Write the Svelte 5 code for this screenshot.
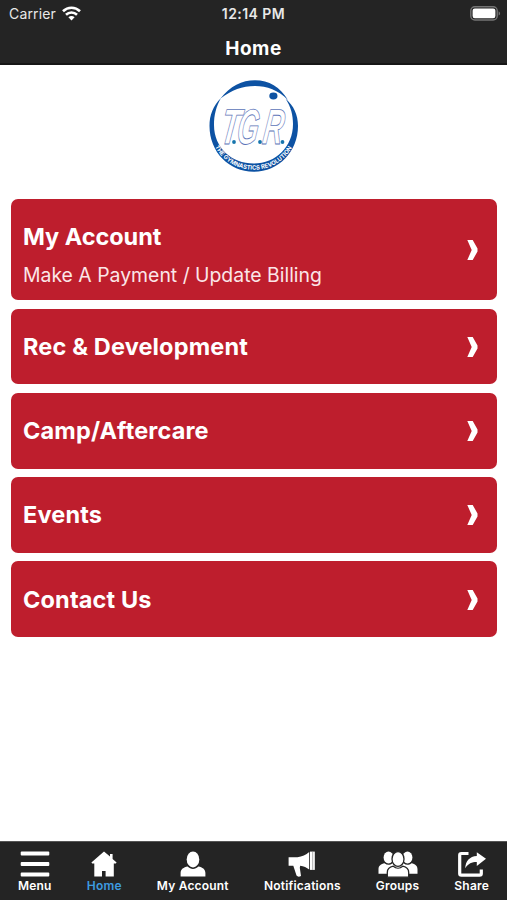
<script>
	const cards = [
		{ title: 'My Account', subtitle: 'Make A Payment / Update Billing' },
		{ title: 'Rec & Development' },
		{ title: 'Camp/Aftercare' },
		{ title: 'Events' },
		{ title: 'Contact Us' }
	];

	const tabs = [
		{ name: 'Menu', icon: 'menu', width: 30 },
		{ name: 'Home', icon: 'home', width: 26 },
		{ name: 'My Account', icon: 'user', width: 26 },
		{ name: 'Notifications', icon: 'megaphone', width: 28 },
		{ name: 'Groups', icon: 'group', width: 40 },
		{ name: 'Share', icon: 'share', width: 30 }
	];

	let active = $state('Home');
</script>

<div class="app">
	<header>
		<div class="status">
			<div class="carrier">
				<span>Carrier</span>
				<svg width="19" height="15" viewBox="0 0 19 15" fill="none" stroke="#fff" stroke-width="2.6">
					<path d="M1 5.3C5.8.6 13.2.6 18 5.3" />
					<path d="M4 8.7c3.1-3 7.9-3 11 0" />
					<path d="M9.5 14.5 6.4 11.3c1.7-1.6 4.5-1.6 6.2 0z" fill="#fff" stroke="none" />
				</svg>
			</div>
			<span class="time">12:14 PM</span>
			<svg class="battery" width="31" height="15" viewBox="0 0 31 15">
				<rect x=".8" y=".8" width="26.4" height="13.2" rx="4" fill="none" stroke="#747474" stroke-width="1.4" />
				<rect x="2.6" y="2.6" width="22.8" height="9.6" rx="2.2" fill="#fff" />
				<path d="M28.6 5.2c2 .8 2 3.6 0 4.4z" fill="#747474" />
			</svg>
		</div>
		<h1>Home</h1>
	</header>

	<main>
		<svg class="logo" width="90" height="94" viewBox="0 0 90 94">
			<defs>
				<path id="rim" d="M5.5 67A44.3 44.3 0 0 0 84 67" />
			</defs>
			<g fill="#0d52a3">
				<!-- upper crescent -->
				<path d="M11.5 19.500C21 7 33 1.200 46 1.200 60 1.200 71 8 79 21 69 11 58 7 46 7 33 7 23 11 11.500 19.500z" />
				<!-- lower band, thickest under the initials -->
				<path d="M12 19C4 27 .5 36 .5 47c0 26 19.500 45.700 44.200 45.700S89 73 89 47C89 36 85 27 76.500 19.500 82 28 84 36 84 45c0 23-17.500 39.500-39.300 39.500S5 69 5 46C5 36 7 28 12 19z" />
				<ellipse cx="64.4" cy="17" rx="4.1" ry="3.4" />
			</g>
			<text class="rim"><textPath href="#rim" startOffset="1" textLength="93" lengthAdjust="spacingAndGlyphs">THE GYMNASTICS REVOLUTION</textPath></text>
			<g class="initials">
				<text transform="translate(10 65) skewX(-8) scale(.62 1)">T</text>
				<text transform="translate(26.500 65) skewX(-8) scale(.55 1)">G</text>
				<text transform="translate(52.500 65) skewX(-8) scale(.56 1)">R</text>
			</g>
			<g fill="#1675ad">
				<circle cx="25" cy="63" r="1.9" />
				<circle cx="51" cy="63" r="1.9" />
				<circle cx="73.5" cy="63" r="1.9" />
			</g>
		</svg>

		<div class="cards">
			{#each cards as card}
				<button class="card" class:tall={card.subtitle}>
					<span class="text">
						<strong>{card.title}</strong>
						{#if card.subtitle}
							<span class="subtitle">{card.subtitle}</span>
						{/if}
					</span>
					<svg width="11" height="20" viewBox="0 0 11 20">
						<path d="M.3 0h5.4L10.5 8.500v3L5.700 20H.3L4.700 10z" fill="#fff" />
					</svg>
				</button>
			{/each}
		</div>
	</main>

	<nav>
		{#each tabs as tab}
			<button class="tab" class:active={active === tab.name} onclick={() => (active = tab.name)}>
				<svg width={tab.width} height="28" viewBox="0 0 {tab.width} 28" fill="#fff">
					{#if tab.icon === 'menu'}
						<rect x=".7" y="1.6" width="28.6" height="4" rx="1" />
						<rect x=".7" y="12" width="28.6" height="4" rx="1" />
						<rect x=".7" y="22.5" width="28.6" height="4" rx="1" />
					{:else if tab.icon === 'home'}
						<path d="M13 1.500.4 12.500 1.200 13.500H3.300V26.500h7.700v-5.500h3.600v5.500H22.800V13.500h2l.8-1-4-3.400V4h-2.600v2.500z" />
					{:else if tab.icon === 'user'}
						<ellipse cx="13" cy="9.4" rx="6.3" ry="8" />
						<path d="M.6 26.5v-3.4c0-4 3-5.8 7-6.6 3.2 3.3 7.6 3.3 10.8 0 4 .8 7 2.6 7 6.6v3.4z" />
					{:else if tab.icon === 'megaphone'}
						<path d="M.6 7.200h8.900C14 6.700 18 4.700 21.200 2v17.500c-2.500-2-5.500-3.300-9-3.800l-.4 2 1.200 8.300q-3 1.500-4.500-.5L5.300 15.700H.6z" />
						<rect x="22" y="1.6" width="4.8" height="18.3" />
						<path d="M24.7 1.6v18.3" stroke="#888" stroke-width=".7" />
					{:else if tab.icon === 'group'}
						<ellipse cx="10.5" cy="7.5" rx="4.9" ry="6" />
						<ellipse cx="29.5" cy="7.5" rx="4.9" ry="6" />
						<path d="M.5 23.8v-4.6c0-3.7 2.500-5.300 6-6 2.500 2 5.500 2 8 0h11c2.500 2 5.500 2 8 0 3.500.7 6 2.300 6 6v4.600z" />
						<g stroke="#242424" stroke-width="1.3">
							<ellipse cx="20" cy="9" rx="6" ry="7.4" />
							<path d="M9.300 27.200v-4.700c0-4 2.500-5.600 6-6.300 2.800 2.600 6.600 2.600 9.400 0 3.500.7 6 2.300 6 6.300v4.700z" />
						</g>
					{:else}
						<path d="M11.500 3.500H4.400q-1.700 0-1.700 1.700v18.200q0 1.700 1.700 1.700h18.200q1.700 0 1.700-1.700V19.500" fill="none" stroke="#fff" stroke-width="3.2" />
						<path d="M19.800 2.200 29 8.700l-9.200 7.300V12.100c-5 0-8.500 1.500-11.600 6.200C8.600 11 12.600 6.500 19.800 6z" />
					{/if}
				</svg>
				<span>{tab.name}</span>
			</button>
		{/each}
	</nav>
</div>

<style>
	:global(body) {
		margin: 0;
		background: #fff;
	}

	.app {
		display: flex;
		flex-direction: column;
		height: 900px;
		font-family: Inter, Roboto, sans-serif;
		color: #fff;
	}

	header {
		box-sizing: border-box;
		height: 65px;
		background: #242424;
		border-bottom: 2px solid #161616;
	}

	.status {
		display: grid;
		grid-template-columns: 1fr auto 1fr;
		align-items: center;
		height: 27px;
		padding: 0 9px;
		color: #e8e8e8;
	}

	.carrier {
		display: flex;
		align-items: center;
		gap: 6px;
		font-size: 14px;
		letter-spacing: 0.15px;
	}

	.time {
		font-size: 14px;
		font-weight: 600;
		letter-spacing: 0.45px;
	}

	.battery {
		justify-self: end;
		margin-right: -3px;
	}

	h1 {
		margin: 0;
		text-align: center;
		font-size: 19px;
		line-height: 44px;
		font-weight: 700;
		letter-spacing: 0.5px;
	}

	main {
		flex: 1;
		display: flex;
		flex-direction: column;
		align-items: center;
	}

	.logo {
		margin: 14px 0 25.5px;
	}

	.rim {
		fill: #fff;
		font-size: 6px;
		font-weight: 700;
	}

	.initials {
		fill: #fff;
		stroke: #5b73b8;
		stroke-width: 0.9;
		font-family: 'Liberation Sans', sans-serif;
		font-size: 50px;
		font-style: italic;
		font-weight: 700;
	}

	.cards {
		align-self: stretch;
		display: flex;
		flex-direction: column;
		gap: 8.5px;
		padding: 0 10px 0 11px;
	}

	button {
		border: 0;
		font-family: inherit;
		color: inherit;
	}

	.card {
		box-sizing: border-box;
		display: flex;
		align-items: center;
		justify-content: space-between;
		height: 75.8px;
		padding: 1px 19px 0 12px;
		border-radius: 7px;
		background: #be1e2d;
		text-align: left;
	}

	.tall {
		height: 101.5px;
	}

	.text {
		display: flex;
		flex-direction: column;
		gap: 10px;
	}

	.tall .text {
		padding-top: 11px;
	}

	strong {
		font-size: 23.5px;
		line-height: 30px;
		font-weight: 700;
		letter-spacing: 0.15px;
	}

	.tall strong {
		letter-spacing: -0.05px;
	}

	.subtitle {
		font-size: 19.4px;
		line-height: 26px;
		color: #fbe6e8;
	}

	nav {
		box-sizing: border-box;
		display: flex;
		justify-content: space-between;
		height: 59px;
		padding: 8px 18px 0;
		border-top: 1px solid #555;
		background: #242424;
	}

	.tab {
		display: flex;
		flex-direction: column;
		align-items: center;
		padding: 0;
		background: none;
		font-size: 12px;
		line-height: 15px;
		font-weight: 600;
		letter-spacing: 0.2px;
	}

	.tab svg {
		margin: 0 -4px;
	}

	.active {
		color: #3d9be0;
	}
</style>
